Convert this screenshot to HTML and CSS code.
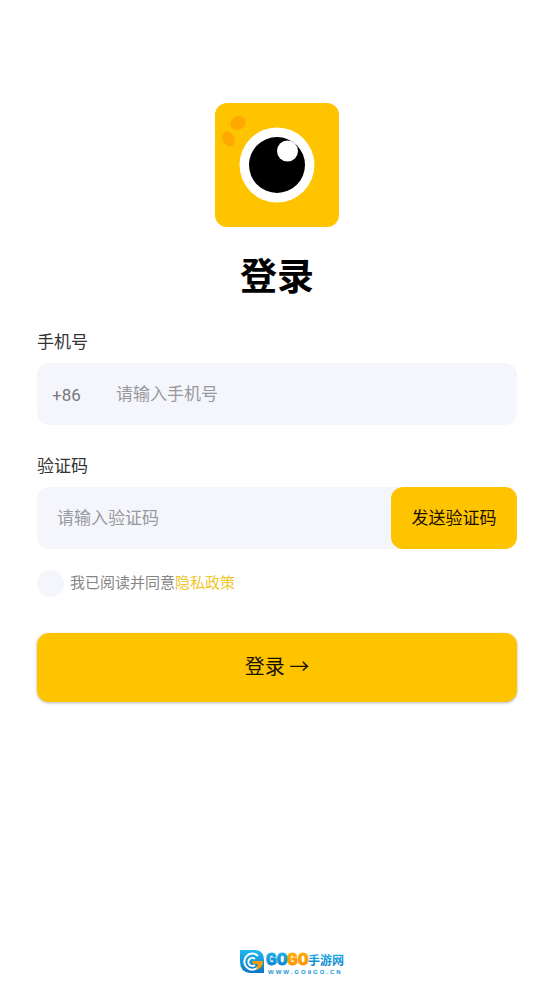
FILE: index.html
```html
<!DOCTYPE html>
<html lang="zh-CN">
<head>
<meta charset="utf-8">
<meta name="viewport" content="width=device-width, initial-scale=1">
<title>登录</title>
<link rel="stylesheet" href="styles.css">
</head>
<body>
<main class="page">
  <svg class="logo" viewBox="0 0 124 124" aria-hidden="true">
    <rect width="124" height="124" rx="12" fill="#ffc400"/>
    <ellipse cx="23" cy="20" rx="8" ry="6.500" transform="rotate(-30 23 20)" fill="#ffa800"/>
    <ellipse cx="13.500" cy="36" rx="6" ry="8" transform="rotate(-28 13.500 36)" fill="#ffa800"/>
    <circle cx="62" cy="62" r="37.500" fill="#fff"/>
    <circle cx="62" cy="62" r="28" fill="#000"/>
    <circle cx="72.500" cy="48" r="10.500" fill="#fff"/>
  </svg>
  <h1 class="title">登录</h1>
  <form class="form">
    <label class="label" for="phone">手机号</label>
    <div class="field">
      <span class="prefix">+86</span>
      <input class="input" id="phone" type="tel" placeholder="请输入手机号">
    </div>
    <label class="label" for="code">验证码</label>
    <div class="field">
      <input class="input input-code" id="code" type="text" placeholder="请输入验证码">
      <button class="send" type="button">发送验证码</button>
    </div>
    <div class="agree">
      <input class="check" id="agree" type="checkbox">
      <label for="agree">我已阅读并同意</label><a class="link" href="#">隐私政策</a>
    </div>
    <button class="submit" type="submit">登录 →</button>
  </form>
  <footer class="footer">
    <svg class="mark" viewBox="0 0 108 28" role="img" aria-label="GOGO手游网">
      <defs>
        <linearGradient id="blue" x1="0" y1="0" x2="0" y2="1">
          <stop offset="0" stop-color="#20b8ee"/>
          <stop offset="1" stop-color="#0878c8"/>
        </linearGradient>
        <linearGradient id="orange" x1="0" y1="0" x2="0" y2="1">
          <stop offset="0" stop-color="#ffb400"/>
          <stop offset="1" stop-color="#ff8a00"/>
        </linearGradient>
      </defs>
      <path d="M1 2H17Q25 3 25 12V25H11Q1 24 1 14Z" fill="url(#blue)"/>
      <path d="M19 8A8 8 0 1 0 20 18" fill="none" stroke="#fff" stroke-width="2"/>
      <path d="M16 11A4 4 0 1 0 16 17" fill="none" stroke="#fff" stroke-width="2"/>
      <path d="M13 13H24Q24 20 17 22L19 16H14Z" fill="#ff9d00"/>
      <text class="mark-go" x="27" y="17" fill="url(#blue)" stroke="url(#blue)">GO</text>
      <text class="mark-go" x="48" y="17" fill="url(#orange)" stroke="url(#orange)">GO</text>
      <text class="mark-cn" x="69" y="17" fill="url(#blue)">手游网</text>
      <text class="mark-url" x="29" y="26" fill="#1595d8">WWW.GO9GO.CN</text>
    </svg>
  </footer>
</main>
</body>
</html>
```

FILE: styles.css
```css
* {
  box-sizing: border-box;
}

body {
  margin: 0;
  background: #fff;
  color: #333;
  font-family: Roboto, "Noto Sans CJK SC", sans-serif;
  font-size: 17px;
  line-height: 24px;
}

button,
input {
  margin: 0;
  border: 0;
  font: inherit;
}

.page {
  display: flex;
  flex-direction: column;
  align-items: center;
  min-height: 100vh;
  padding: 103px 37px 8px;
}

.logo {
  width: 124px;
  height: 124px;
}

.title {
  margin: 25px 0 26px;
  color: #000;
  font-size: 37px;
  font-weight: 700;
  line-height: 52px;
}

.form {
  display: flex;
  flex-direction: column;
  width: 100%;
}

.label {
  margin-bottom: 9px;
}

.field {
  display: flex;
  height: 62px;
  margin-bottom: 29px;
  border-radius: 12px;
  background: #f5f6fb;
}

.prefix {
  width: 59px;
  padding-left: 15px;
  color: #77787c;
  line-height: 64px;
}

.input {
  flex: 1;
  min-width: 0;
  padding: 0 20px;
  background: transparent;
  color: #333;
}

.input-code {
  padding-right: 8px;
}

.input::placeholder {
  color: #98999d;
  opacity: 1;
}

.send {
  width: 126px;
  padding: 0;
  border-radius: 12px;
  background: #ffc400;
  color: #1a1000;
}

.agree {
  display: flex;
  align-items: center;
  height: 28px;
  margin: -9px 0 36px;
  color: #858585;
  font-size: 15px;
}

.check {
  appearance: none;
  width: 27px;
  height: 27px;
  margin-right: 6px;
  border-radius: 50%;
  background: #f5f6fb;
}

.check:checked {
  background: #ffc400;
}

.link {
  color: #efc52a;
  text-decoration: none;
}

.submit {
  height: 69px;
  padding: 0 0 4px;
  border-radius: 12px;
  background: #ffc400;
  box-shadow: 0 1px 3px rgba(0, 0, 0, 0.3);
  color: #1a1000;
  font-family: "Noto Sans CJK SC", sans-serif;
  font-size: 20px;
}

.footer {
  margin-top: auto;
  padding-left: 32px;
}

.mark {
  display: block;
  width: 108px;
  height: 28px;
}

.mark-go {
  font: 700 18px "Liberation Mono", monospace;
}

.mark-cn {
  font: 700 12px "Noto Sans CJK SC", sans-serif;
}

.mark-url {
  font: 700 6px "Liberation Sans", sans-serif;
  letter-spacing: 2px;
}
```
